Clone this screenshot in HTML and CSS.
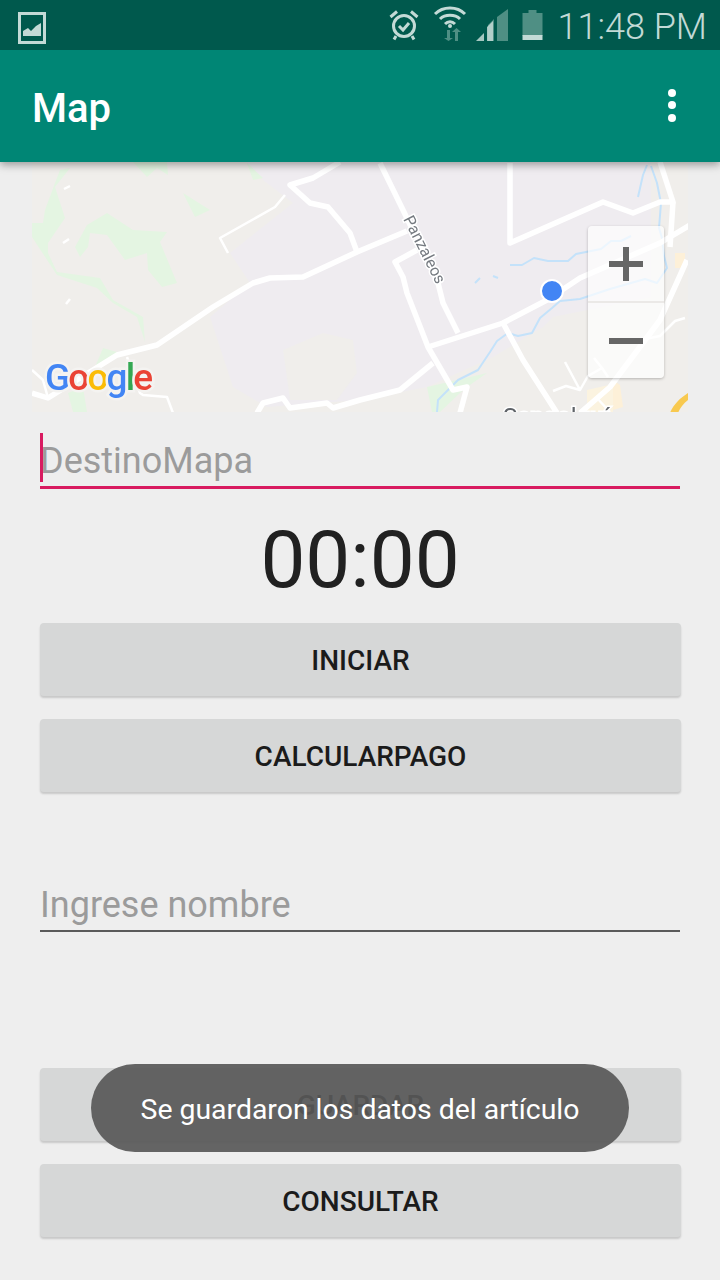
FILE: index.html
```html
<!DOCTYPE html>
<html lang="es">
<head>
<meta charset="utf-8">
<title>Map</title>
<link rel="stylesheet" href="styles.css">
</head>
<body>
<div class="screen">
  <header class="top">
    <div class="status">
      <svg class="ic-image" viewBox="0 0 28 32"><path class="st-solid" fill-rule="evenodd" d="M0 0h28v32H0zM3 3v26h22V3z"/><path class="st-solid" d="M5 24v-5l5-3 3 3 5-5 5-3v13z"/></svg>
      <div class="status-right">
        <svg class="ic-alarm" viewBox="0 0 30 32"><circle class="st-line" cx="15" cy="17" r="10.5"/><path class="st-line" d="M10 17l4 4 6-7"/><path class="st-line" d="M1.500 8L8 2.500M28.500 8L22 2.500M7 27l-2 3.500M23 27l2 3.500"/></svg>
        <svg class="ic-wifi" viewBox="0 0 34 36"><path class="st-line" d="M2 9C10 1 24 1 32 9M7 14C12 9 22 9 27 14M12 19C15 16 19 16 22 19"/><circle class="st-solid" cx="17" cy="21" r="2"/><path class="st-dim" d="M14 25v8h-3l4.500 3 4.500-3h-3v-8zM22 36v-9h-3l4.500-4 4.500 4h-3v9z"/></svg>
        <svg class="ic-signal" viewBox="0 0 32 32"><path class="st-dim" d="M12 32V16l6-6v22zM21 32V8l11-8v32z"/><path class="st-solid" d="M0 32l8-8v8zM11 32V18l6-6v20z" opacity=".85"/></svg>
        <svg class="ic-battery" viewBox="0 0 20 30"><path class="st-dim" d="M6 0h8v3h6v23H0V3h6z"/><path class="st-solid" d="M0 25h20v5H0z"/></svg>
        <span class="clock">11:48 PM</span>
      </div>
    </div>
    <div class="appbar">
      <span class="title">Map</span>
      <svg class="ic-more" viewBox="0 0 8 34"><circle cx="4" cy="4" r="4"/><circle cx="4" cy="16" r="4"/><circle cx="4" cy="29" r="4"/></svg>
    </div>
  </header>

  <main class="content">
    <div class="map">
      <svg class="map-art" viewBox="32 162 656 250">
        <rect class="m-land" x="32" y="162" width="656" height="250"/>
        <path class="m-purple" d="M247 162l16 18 30 23-63 50 20 30-40 34 23 70 34 20 93-7 67-13 66-30 50-30 10-10 98-20V162z"/>
        <path class="m-land" d="M283 350l40-17 30 7 4 33-20 27-47 0z"/>
        <path class="m-green" d="M32 223h11l2-13 10-27 5-13 10-2-15 19 10 31-17 25v10l9 19 43 6 13 22 30 17 2 25-8-25-24-14-16-15-40-13-25-38zM75 247l12-22 20-12 26 17 34 2-7 10 17 41-15 4-14-17-1-17-22 7-18-25-17-2-2 14-8 10zM183 193l27 17-15 7zM133 162h34l1 13-11-7-10 9zM247 163l16 15-10 2zM103 348l17 5-25 14zM68 393l15-6 4 25H73zM427 387l60-14-20 14-7 6-20 19h-8z"/>
        <path class="m-beige" d="M675 253h10v15h-10zM613 380l7 5 3 22-10 3z"/>
        <path class="m-town" d="M587 390l26-6 0 28-26 0z"/>
        <path class="m-yellow" d="M670 413c3-8 10-15 18-20v7c-5 4-8 8-10 13z"/>
        <g class="m-water">
          <path d="M437 412l1-12 8-8 12-12 20-10 12-18 7-11 11-8 10 3 14-3 8-15 12-10 8-7 20-2 30-10 35-10 12 4 10-15-3-12-2-18-3-10 2-25-4-20-6-17"/>
          <path d="M475 283l5-5M493 276l5 2M510 265l12 0 12-7 14 3 20 0 8-7 25-5 10-8 10 0 10-5M638 197l5-22 4-10"/>
        </g>
        <g class="m-road">
          <path d="M32 393l16 5 69-43 40-10 56-38 40-24 17-5 33-1 54-25 50-21"/>
          <path d="M340 162l-27 16-23 7 20 18 18 4 22 26 7 19"/>
          <path d="M380 163l23 47 35 73 5 20 15 30"/>
          <path d="M428 347l75-24 44-23 33-22 80-35 30-18"/>
          <path d="M417 250l-22 12 8 15 4 16 21 54 25 43 14-3 -7 26"/>
          <path d="M503 323l20 37 34 53"/>
          <path d="M510 163v80l93-41 30 11 27-11h13l-13-40"/>
          <path d="M673 202l-3 45M687 260l-27 60-50 67-30 26"/>
          <path d="M433 363l-33 27-40 10-27 8-6-5-37 5-7-10-20 5-3 5-3 5"/>
        </g>
        <g class="m-thin">
          <path d="M285 195l-10 12-55 31 8 15"/>
          <path d="M127 357l13 36 3 2 24 2 6 16"/>
          <path d="M32 370l11 10 5 18"/>
          <path d="M565 362l15 28-14-4-13 5M580 390l8-14 14-8 6 9M602 368l-8-10M640 340l20-4 15-15 10-3M596 397l14 15"/>
          <path d="M70 186l-6 3M63 243l6-4M66 304l4-5"/>
        </g>
        <text class="m-street" transform="translate(403 219) rotate(63)">Panzaleos</text>
        <text class="m-place" x="503" y="425">Sangolquí</text>
        <text class="m-google" x="45" y="390" textLength="108"><tspan class="g-blue">G</tspan><tspan class="g-red">o</tspan><tspan class="g-yellow">o</tspan><tspan class="g-blue">g</tspan><tspan class="g-green">l</tspan><tspan class="g-red">e</tspan></text>
        <circle class="m-dot" cx="552" cy="291" r="11"/>
      </svg>
      <div class="zoom-ctl">
        <div class="zoom-btn"><svg class="ic-zoom" viewBox="0 0 34 34"><path d="M14 0h6v14h14v6H20v14h-6V20H0v-6h14z"/></svg></div>
        <div class="zoom-btn"><svg class="ic-zoom" viewBox="0 0 34 34"><path d="M0 14h34v6H0z"/></svg></div>
      </div>
    </div>

    <div class="field field-active">
      <span class="caret"></span>
      <span class="hint">DestinoMapa</span>
    </div>

    <div class="timer">00:00</div>

    <button class="btn">INICIAR</button>
    <button class="btn btn-gap">CALCULARPAGO</button>

    <div class="field field-name">
      <span class="hint">Ingrese nombre</span>
    </div>

    <button class="btn btn-save">GUARDAR</button>
    <button class="btn btn-gap">CONSULTAR</button>
  </main>

  <div class="toast">Se guardaron los datos del artículo</div>
</div>
</body>
</html>
```

FILE: styles.css
```css
* { box-sizing: border-box; }
html, body { margin: 0; padding: 0; }
body { background: #eeeeee; font-family: Roboto, "Noto Sans", sans-serif; }
.screen { position: relative; width: 720px; height: 1280px; overflow: hidden; background: #eeeeee; }

.top { position: relative; z-index: 2; box-shadow: 0 3px 8px rgba(0,0,0,.35); }
.status { height: 50px; background: #00594d; display: flex; align-items: center; justify-content: space-between; padding: 0 13px 0 18px; }
.status-right { display: flex; align-items: center; }
.st-solid { fill: #c3dad6; }
.st-dim { fill: #4f8f84; }
.st-line { fill: none; stroke: #c3dad6; stroke-width: 3; }
.ic-image { width: 28px; height: 32px; margin-top: 6px; }
.ic-alarm { width: 30px; height: 32px; margin-right: 14px; }
.ic-wifi { width: 34px; height: 36px; margin-right: 9px; margin-top: -5px; }
.ic-signal { width: 32px; height: 32px; margin-right: 14px; }
.ic-battery { width: 21px; height: 30px; margin-right: 14px; }
.clock { font-size: 36px; font-weight: 300; color: #c3dad6; line-height: 50px; padding-top: 3px; }

.appbar { height: 112px; background: #008675; display: flex; align-items: center; justify-content: space-between; padding: 0 44px 0 32px; }
.title { font-size: 40px; font-weight: 500; color: #ffffff; padding-top: 4px; }
.ic-more { width: 8px; height: 34px; fill: #ffffff; }

.content { display: flex; flex-direction: column; }
.map { position: relative; height: 250px; margin: 0 32px; overflow: hidden; }
.map-art { display: block; width: 656px; height: 250px; filter: blur(.5px); }
.m-land { fill: #f0eeeb; }
.m-purple { fill: #efecf0; }
.m-green { fill: #e4f5e2; }
.m-beige { fill: #fdf0d8; }
.m-town { fill: #fbf3e0; }
.m-yellow { fill: #f8c94f; }
.m-water path { fill: none; stroke: #c4e2fa; stroke-width: 2; stroke-linejoin: round; }
.m-road path { fill: none; stroke: #ffffff; stroke-width: 5.500; stroke-linejoin: round; }
.m-thin path { fill: none; stroke: #ffffff; stroke-width: 2.500; stroke-linejoin: round; }
.m-street { font-size: 16px; fill: #757a80; stroke: #ffffff; stroke-width: 3px; paint-order: stroke; }
.m-place { font-size: 24px; fill: #5f6368; stroke: #ffffff; stroke-width: 3px; paint-order: stroke; }
.m-google { font-family: Roboto, sans-serif; font-size: 37px; font-weight: 500; stroke-width: 5px; stroke: #f4f3f1; paint-order: stroke; }
.g-blue { fill: #4285f4; }
.g-red { fill: #ea4335; }
.g-yellow { fill: #fbbc05; }
.g-green { fill: #34a853; }
.m-dot { fill: #4285f4; stroke: #ffffff; stroke-width: 2; }

.zoom-ctl { position: absolute; left: 556px; top: 64px; width: 76px; height: 152px; border-radius: 4px; background: rgba(255,255,255,.68); box-shadow: 0 1px 3px rgba(0,0,0,.25); display: flex; flex-direction: column; }
.zoom-btn { flex: 1; display: flex; align-items: center; justify-content: center; }
.zoom-btn + .zoom-btn { border-top: 2px solid #ebe9e7; }
.ic-zoom { width: 34px; height: 34px; fill: #666666; }

.field { position: relative; margin: 0 40px; display: flex; align-items: flex-end; }
.field-active { height: 77px; border-bottom: 3px solid #d81b60; padding-bottom: 4px; }
.caret { position: absolute; left: 0; top: 21px; width: 3px; height: 49px; background: #d81b60; }
.field-name { height: 140px; border-bottom: 2px solid #5a5a5a; padding-bottom: 4px; }
.hint { font-size: 36px; line-height: 42px; color: #9b9b9b; }

.timer { height: 134px; display: flex; align-items: center; justify-content: center; font-size: 80px; color: #212121; padding-top: 8px; }

.btn { display: block; width: 641px; height: 73px; margin: 0 0 0 40px; padding: 2px 0 0; border: 0; border-radius: 4px; background: #d6d7d7; box-shadow: 0 2px 2px rgba(0,0,0,.16); font-family: Roboto, sans-serif; font-size: 28px; font-weight: 500; color: #1b1b1b; }
.btn-gap { margin-top: 23px; }
.btn-save { margin-top: 136px; }

.toast { position: absolute; left: 91px; top: 1064px; width: 538px; height: 88px; border-radius: 44px; background: rgba(88,88,88,.92); color: #ffffff; font-size: 28.400px; display: flex; align-items: center; justify-content: center; padding-top: 2px; }
```
